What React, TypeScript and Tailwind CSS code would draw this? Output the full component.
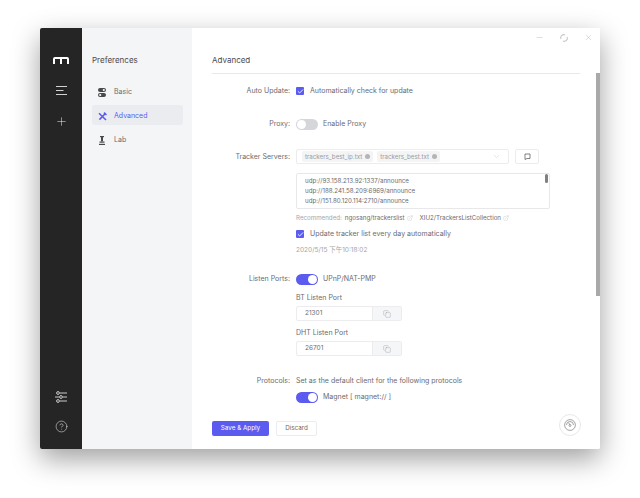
import React from "react";
import { Check, ChevronDown, Copy, ExternalLink, HelpCircle, Minus, Plus, X } from "lucide-react";

const Toggle = ({ on }: { on: boolean }) => (
  <span className={on ? "flex h-[11px] w-[22px] items-center justify-end rounded-full bg-[#5b5bf0] px-[1px]" : "flex h-[11px] w-[22px] items-center justify-start rounded-full bg-[#d5d6da] px-[1px]"}>
    <span className="h-[9px] w-[9px] rounded-full bg-white" />
  </span>
);

const CheckBox = () => (
  <span className="flex h-[8px] w-[8px] items-center justify-center rounded-[1px] bg-[#5b5bf0]">
    <Check size={7} color="white" strokeWidth={3} />
  </span>
);

const Row = ({ label, className, children }: { label: string; className: string; children: React.ReactNode }) => (
  <div className={`flex ${className}`}>
    <div className="w-[78px] shrink-0 text-right leading-[12px]">{label}</div>
    <div className="ml-[6px] min-w-0 flex-1">{children}</div>
  </div>
);

const Tag = ({ text }: { text: string }) => (
  <span className="flex h-[11px] items-center gap-[3px] rounded-[2px] bg-[#f4f4f5] px-[3px] text-[6.2px] text-[#9a9aa0]">
    {text}
    <span className="h-[5px] w-[5px] rounded-full bg-[#b5b5b9]" />
  </span>
);

const PortInput = ({ value }: { value: string }) => (
  <div className="flex h-[15px] w-[106px] overflow-hidden rounded-[2px] border border-[#ececee] text-[6.5px] text-[#6b6b70]">
    <div className="flex flex-1 items-center pl-[8px]">{value}</div>
    <div className="flex w-[29px] items-center justify-center border-l border-[#ececee] bg-[#f5f6f8] text-[#8d8d92]">
      <Copy size={8} strokeWidth={1} />
    </div>
  </div>
);

const MenuItem = ({ label, active, icon }: { label: string; active?: boolean; icon: React.ReactNode }) => (
  <div className={active ? "flex h-[20px] items-center rounded-[2px] bg-[#ebecf0] pl-[5px] pt-[2px] text-[#5b5bf0]" : "flex h-[20px] items-center pl-[5px] pt-[2px] text-[#6b6b70]"}>
    <span className="flex w-[10px] justify-center">{icon}</span>
    <span className="ml-[7px] text-[7px]">{label}</span>
  </div>
);

export default function App() {
  return (
    <div className="flex h-[498px] w-[640px] bg-white pl-[40px] pt-[28px] font-['Inter',sans-serif]">
      <div className="flex h-[421px] w-[560px] overflow-hidden rounded-[2px] shadow-[0_10px_28px_rgba(0,0,0,0.38)]">
        <aside className="flex w-[42px] shrink-0 flex-col items-center bg-[#252525] pb-[16px] pt-[29px] text-[#f0f0f0]">
          <svg width="16" height="7" viewBox="0 0 16 7" fill="none" stroke="white" strokeWidth="2">
            <path d="M1 7V2Q1 1 2 1H14Q15 1 15 2V7M8 1V7" />
          </svg>
          <svg className="mt-[22px]" width="11" height="9" viewBox="0 0 11 9" fill="none" stroke="#e8e8e8" strokeWidth="0.9">
            <path d="M0 0.5H11M0 4.5H7.5M0 8.5H11" />
          </svg>
          <Plus className="mt-[20px]" size={13} strokeWidth={1} color="#e8e8e8" />
          <div className="flex-1" />
          <svg width="12" height="12" viewBox="0 0 12 12" fill="none" stroke="#dddddd" strokeWidth="0.9">
            <circle cx="3" cy="2" r="1.4" />
            <path d="M5 2H12" />
            <circle cx="6" cy="6" r="1.4" />
            <path d="M0 6H4M8 6H12" />
            <circle cx="3" cy="10" r="1.4" />
            <path d="M5 10H12" />
          </svg>
          <HelpCircle className="mt-[17px]" size={13} strokeWidth={1.1} color="#dddddd" />
        </aside>

        <nav className="w-[110px] shrink-0 bg-[#f4f5f7] pl-[10px] pr-[9px] pt-[26px]">
          <div className="text-[8px] leading-[12px] text-[#4a4a4d]">Preferences</div>
          <div className="mt-[15px] flex flex-col gap-[4px]">
            <MenuItem
              label="Basic"
              icon={
                <svg width="8" height="9" viewBox="0 0 8 9">
                  <rect y="0" width="8" height="4" rx="2" fill="#4a4a4d" />
                  <rect y="5" width="8" height="4" rx="2" fill="#4a4a4d" />
                  <circle cx="5.8" cy="2" r="1.1" fill="white" />
                  <circle cx="2.2" cy="7" r="1.1" fill="white" />
                </svg>
              }
            />
            <MenuItem
              label="Advanced"
              active
              icon={
                <svg width="9" height="9" viewBox="0 0 9 9" fill="none" stroke="#5b5bf0" strokeWidth="1.6">
                  <path d="M1 1.2L8 8M7.6 1.2L1.4 7.6" />
                  <path d="M6 0.6L8.4 3" />
                </svg>
              }
            />
            <MenuItem
              label="Lab"
              icon={
                <svg width="6" height="9" viewBox="0 0 6 9" fill="#4a4a4d">
                  <rect x="1" y="0" width="4" height="1.2" />
                  <rect x="2" y="1" width="2" height="4.5" />
                  <rect x="0.5" y="5.5" width="5" height="1.2" />
                  <rect x="0" y="7.8" width="6" height="1.2" />
                </svg>
              }
            />
          </div>
        </nav>

        <main className="relative flex min-w-0 flex-1 flex-col bg-white pl-[20px] pr-[20px] pt-[26px] text-[7px] text-[#6b6b70]">
          <div className="absolute right-[7px] top-[5px] flex items-center gap-[16px] text-[#a8a8ac]">
            <Minus size={9} strokeWidth={1} />
            <svg width="8" height="8" viewBox="0 0 8 8" fill="none" stroke="#c8c8cc" strokeWidth="1.1">
              <path d="M1 5A3 3 0 0 1 5 1M7 3A3 3 0 0 1 3 7" />
            </svg>
            <X size={9} strokeWidth={1} />
          </div>
          <div className="absolute right-0 top-[45px] h-[223px] w-[4px] bg-[#a9a9ab]" />

          <h1 className="border-b border-[#e8e8ea] pb-[7px] text-[8px] font-normal leading-[12px] text-[#4a4a4d]">Advanced</h1>

          <Row label="Auto Update:" className="mt-[11px]">
            <div className="flex h-[12px] items-center gap-[6px]">
              <CheckBox />
              <span>Automatically check for update</span>
            </div>
          </Row>

          <Row label="Proxy:" className="mt-[21px]">
            <div className="flex h-[12px] items-center gap-[5px]">
              <Toggle on={false} />
              <span>Enable Proxy</span>
            </div>
          </Row>

          <Row label="Tracker Servers:" className="mt-[21px] h-[122px]">
            <div className="-mt-[2px] flex gap-[6px]">
              <div className="flex h-[15px] w-[213px] items-center gap-[4px] rounded-[2px] border border-[#ececee] pl-[5px] pr-[7px]">
                <Tag text="trackers_best_ip.txt" />
                <Tag text="trackers_best.txt" />
                <ChevronDown className="ml-auto" size={9} strokeWidth={1} color="#b8b8bc" />
              </div>
              <div className="flex h-[15px] w-[24px] items-center justify-center rounded-[2px] border border-[#ececee]">
                <svg width="7" height="7" viewBox="0 0 7 7" fill="none" stroke="#606266" strokeWidth="0.8">
                  <path d="M1 1H6V5.5H3L1 6.5Z" />
                </svg>
              </div>
            </div>
            <div className="relative mt-[9px] h-[36px] w-[254px] overflow-hidden rounded-[2px] border border-[#e8e8ea] pl-[8px] pt-[2px] text-[6.2px] leading-[10px]">
              <div>udp://93.158.213.92:1337/announce</div>
              <div>udp://188.241.58.209:6969/announce</div>
              <div>udp://151.80.120.114:2710/announce</div>
              <div>udp://94.23.183.33:6969/announce</div>
              <div className="absolute right-[1px] top-0 h-[9px] w-[3px] rounded-full bg-[#808084]" />
            </div>
            <div className="mt-[4px] flex h-[10px] items-center text-[6.2px] text-[#a5a5a9]">
              Recommended:
              <span className="ml-[3px] text-[#6b6b70]">ngosang/trackerslist</span>
              <ExternalLink className="ml-[2px]" size={6} strokeWidth={1} />
              <span className="ml-[7px] text-[#6b6b70]">XIU2/TrackersListCollection</span>
              <ExternalLink className="ml-[2px]" size={6} strokeWidth={1} />
            </div>
            <div className="mt-[5px] flex h-[12px] items-center gap-[6px]">
              <CheckBox />
              <span>Update tracker list every day automatically</span>
            </div>
            <div className="mt-[4px] h-[10px] text-[6.5px] leading-[10px] text-[#a5a5a9]">
              2020/5/15 <span className="font-['Noto_Sans_CJK_SC',sans-serif]">下午</span>10:18:02
            </div>
          </Row>

          <Row label="Listen Ports:" className="mt-0">
            <div className="flex h-[12px] items-center gap-[5px]">
              <Toggle on />
              <span>UPnP/NAT-PMP</span>
            </div>
            <div className="mt-[7px] leading-[12px]">BT Listen Port</div>
            <div className="mt-[2px]"><PortInput value="21301" /></div>
            <div className="mt-[6px] leading-[12px]">DHT Listen Port</div>
            <div className="mt-[2px]"><PortInput value="26701" /></div>
          </Row>

          <Row label="Protocols:" className="mt-[19px]">
            <div className="leading-[12px]">Set as the default client for the following protocols</div>
            <div className="mt-[4px] flex h-[12px] items-center gap-[5px]">
              <Toggle on />
              <span>Magnet [ magnet:// ]</span>
            </div>
          </Row>

          <div className="mt-[18px] flex items-center gap-[7px] text-[6.3px]">
            <button className="h-[15px] w-[57px] rounded-[2px] bg-[#5b5bf0] text-white">Save &amp; Apply</button>
            <button className="h-[15px] w-[41px] rounded-[2px] border border-[#ececee] bg-white text-[#6b6b70]">Discard</button>
          </div>

          <div className="absolute bottom-[13px] right-[19px] flex h-[22px] w-[22px] items-center justify-center rounded-full border border-[#e8e8ea]">
            <svg width="12" height="12" viewBox="0 0 12 12" fill="none" stroke="#8d8d92" strokeWidth="0.8">
              <circle cx="6" cy="6" r="5.4" />
              <path d="M2.5 6A3.5 3.5 0 0 1 9.5 6M6 6L4.5 3.6" />
              <circle cx="6" cy="6.5" r="1" />
            </svg>
          </div>
        </main>
      </div>
    </div>
  );
}
